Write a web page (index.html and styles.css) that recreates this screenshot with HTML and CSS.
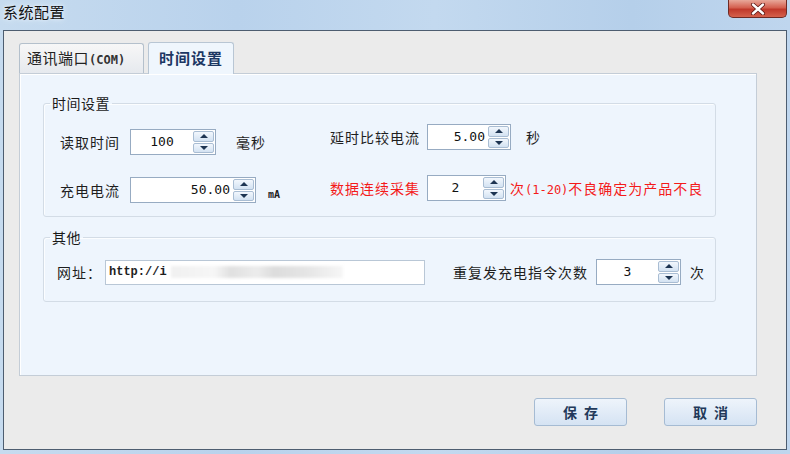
FILE: index.html
```html
<!DOCTYPE html>
<html lang="zh-CN">
<head>
    <meta charset="UTF-8">
    <title>系统配置</title>
    <link rel="stylesheet" href="styles.css">
</head>
<body>
    <div class="window">
        <div class="titlebar">
            <div class="title">系统配置</div>
            <div class="close">
                <svg width="16" height="12" viewBox="0 0 16 12">
                    <path d="M3 1.5 L13 10.5 M13 1.5 L3 10.5" stroke="#5a1410" stroke-width="4" stroke-linecap="round"/>
                    <path d="M3 1.5 L13 10.5 M13 1.5 L3 10.5" stroke="#fff" stroke-width="2.4" stroke-linecap="round"/>
                </svg>
            </div>
        </div>

        <div class="client">
            <div class="tabs">
                <div class="tab">通讯端口<span class="mono">(COM)</span></div>
                <div class="tab active">时间设置</div>
            </div>

            <div class="panel">
                <fieldset class="group group-time">
                    <legend>时间设置</legend>
                    <div class="col col-left">
                        <div class="row">
                            <span class="label label-left">读取时间</span>
                            <div class="spin w86 center">
                                <span class="val">100</span>
                                <span class="btns"><span class="btn up"></span><span class="btn down"></span></span>
                            </div>
                            <span class="unit unit-ms">毫秒</span>
                        </div>
                        <div class="row">
                            <span class="label label-left">充电电流</span>
                            <div class="spin w126 right">
                                <span class="val">50.00</span>
                                <span class="btns"><span class="btn up"></span><span class="btn down"></span></span>
                            </div>
                            <span class="unit unit-ma">mA</span>
                        </div>
                    </div>
                    <div class="col col-right">
                        <div class="row">
                            <span class="label label-right">延时比较电流</span>
                            <div class="spin w84 right">
                                <span class="val">5.00</span>
                                <span class="btns"><span class="btn up"></span><span class="btn down"></span></span>
                            </div>
                            <span class="unit unit-s">秒</span>
                        </div>
                        <div class="row red">
                            <span class="label label-right">数据连续采集</span>
                            <div class="spin w79 center">
                                <span class="val">2</span>
                                <span class="btns"><span class="btn up"></span><span class="btn down"></span></span>
                            </div>
                            <span class="unit unit-note">次<span class="mono">(1-20)</span>不良确定为产品不良</span>
                        </div>
                    </div>
                </fieldset>

                <fieldset class="group group-other">
                    <legend>其他</legend>
                    <div class="row">
                        <span class="label label-url">网址：</span>
                        <div class="textbox">
                            <span class="url">http://i</span><span class="blurred"></span>
                        </div>
                        <span class="label label-retry">重复发充电指令次数</span>
                        <div class="spin w85 center">
                            <span class="val">3</span>
                            <span class="btns"><span class="btn up"></span><span class="btn down"></span></span>
                        </div>
                        <span class="unit unit-times">次</span>
                    </div>
                </fieldset>
            </div>

            <div class="actions">
                <button class="action">保 存</button>
                <button class="action">取 消</button>
            </div>
        </div>
    </div>
</body>
</html>
```

FILE: styles.css
```css
body {
    margin: 0;
    width: 790px;
    height: 454px;
    overflow: hidden;
    font-family: "Noto Sans CJK SC", "Liberation Sans", sans-serif;
    font-size: 14px;
    color: #1e1e1e;
}
.window {
    height: 454px;
    display: flex;
    flex-direction: column;
    background: linear-gradient(90deg, #c6dbef 0%, #b9d2ec 30%, #c3d9ef 55%, #b5cfea 80%, #bfd6ee 100%);
}
.titlebar {
    height: 30px;
    display: flex;
    justify-content: space-between;
    align-items: flex-start;
}
.title {
    padding: 2px 0 0 3px;
    font-size: 15px;
    line-height: 20px;
    letter-spacing: 0.5px;
    color: #111;
    text-shadow: 0 0 6px #eaf3fb, 0 0 3px #eaf3fb;
}
.close {
    width: 59px;
    height: 18px;
    margin-right: 3px;
    box-sizing: border-box;
    border: 1px solid #6e2a24;
    border-top: none;
    border-radius: 0 0 5px 5px;
    background: linear-gradient(#e8a89a 0%, #d4604f 45%, #c0392b 55%, #d5614c 100%);
    display: flex;
    align-items: center;
    justify-content: center;
}
.client {
    flex: 1;
    margin: 0 3px 4px 3px;
    border: 1px solid #4d5d70;
    background: #ebebeb;
    padding: 11px 29px 0 15px;
}
.mono {
    font-family: "DejaVu Sans Mono", "Liberation Mono", monospace;
    font-size: 12px;
    letter-spacing: 0;
}

/* tabs */
.tabs {
    display: flex;
    align-items: flex-end;
    gap: 4px;
    height: 31px;
}
.tab {
    height: 30px;
    box-sizing: border-box;
    border: 1px solid #b4c0cc;
    border-bottom: none;
    border-radius: 3px 3px 0 0;
    background: linear-gradient(#f7f7f7, #e6e9ee);
    padding: 0 7px;
    width: 125px;
    line-height: 28px;
    font-size: 15px;
    color: #222;
    letter-spacing: 0.5px;
}
.tab .mono {
    font-weight: bold;
    font-size: 12px;
    color: #333;
}
.tab.active {
    width: 86px;
    height: 32px;
    margin-bottom: -1px;
    background: #eff6fd;
    border-color: #b8c6d4;
    font-weight: bold;
    color: #1c3763;
    letter-spacing: 1px;
    text-align: center;
    padding: 0;
    line-height: 30px;
    position: relative;
}

/* panel */
.panel {
    height: 303px;
    box-sizing: border-box;
    border: 1px solid #c4cdd7;
    box-shadow: inset 1px 1px 0 #fff;
    background: #eef5fd;
    padding: 21px 40px 0 23px;
}
.group {
    margin: 0;
    border: 1px solid #d3dce6;
    border-radius: 3px;
    box-shadow: inset 1px 1px 0 #fbfdff;
    padding: 0;
}
.group legend {
    padding: 0 2px;
    font-size: 14px;
    line-height: 16px;
    letter-spacing: 0.5px;
    color: #1a1a1a;
}
.group-time {
    display: flex;
    padding: 13px 0 13px 16px;
}
.group-time legend { margin-left: -10px; }
.group-other {
    margin-top: 12px;
    padding: 14px 0 16px 13px;
}
.group-other legend { margin-left: -7px; }

.col {
    display: flex;
    flex-direction: column;
}
.col-left {
    width: 270px;
    padding-top: 5px;
    gap: 22px;
}
.col-right {
    gap: 25px;
}
.row {
    display: flex;
    align-items: center;
    height: 26px;
}
.label {
    letter-spacing: 1px;
}
.label-left { width: 70px; }
.label-right { width: 97px; }
.label-url { width: 48px; }
.label-retry {
    margin-left: 28px;
    width: 143px;
}
.red .label, .red .unit { color: #f41a1a; }

.unit { letter-spacing: 1px; }
.unit-ms { margin-left: 20px; }
.unit-ma {
    margin-left: 12px;
    margin-top: 8px;
    font-family: "DejaVu Sans Mono", monospace;
    font-weight: bold;
    font-size: 10px;
    letter-spacing: 0;
}
.unit-s { margin-left: 15px; }
.unit-note { margin-left: 4px; }
.unit-times { margin-left: 9px; }

/* spin boxes */
.spin {
    height: 26px;
    box-sizing: border-box;
    border: 1px solid #97abc2;
    background: #fff;
    display: flex;
}
.w86 { width: 86px; }
.w126 { width: 126px; }
.w84 { width: 84px; }
.w79 { width: 79px; }
.w85 { width: 85px; }
.val {
    flex: 1;
    font-family: "DejaVu Sans Mono", "Liberation Mono", monospace;
    font-size: 13px;
    line-height: 24px;
    color: #111;
    padding: 0 3px;
}
.center .val { text-align: center; }
.right .val { text-align: right; }
.btns {
    width: 21px;
    display: flex;
    flex-direction: column;
    gap: 1px;
    padding: 1px 1px 1px 0;
}
.btn {
    flex: 1;
    border: 1px solid #a9bdd3;
    border-radius: 2px;
    background: linear-gradient(#f2f7fd, #d3e2f2);
    display: flex;
    align-items: center;
    justify-content: center;
}
.btn::after {
    content: "";
    border-left: 4px solid transparent;
    border-right: 4px solid transparent;
}
.up::after { border-bottom: 4px solid #1d3452; }
.down::after { border-top: 4px solid #1d3452; }

/* url box */
.textbox {
    width: 320px;
    height: 25px;
    box-sizing: border-box;
    border: 1px solid #b9c7d6;
    background: #fff;
    display: flex;
    align-items: center;
    padding-left: 3px;
}
.url {
    font-family: "Liberation Mono", monospace;
    font-weight: bold;
    font-size: 12px;
}
.blurred {
    width: 172px;
    height: 12px;
    margin-left: 4px;
    background: linear-gradient(90deg, #f0f0f0 0%, #f6f6f6 25%, #e0e0e0 35%, #ececec 50%, #dcdcdc 60%, #e6e6e6 80%, #f6f6f6 100%);
    filter: blur(1.5px);
}

/* buttons */
.actions {
    display: flex;
    justify-content: flex-end;
    gap: 37px;
    margin-top: 22px;
}
.action {
    width: 93px;
    height: 28px;
    border: 1px solid #a5bbd3;
    border-radius: 3px;
    background: linear-gradient(#eef4fb, #d5e3f3);
    font-family: "Noto Sans CJK SC", sans-serif;
    font-size: 14px;
    font-weight: bold;
    color: #22395a;
    letter-spacing: 2px;
    text-indent: 2px;
    padding: 0;
}
```
